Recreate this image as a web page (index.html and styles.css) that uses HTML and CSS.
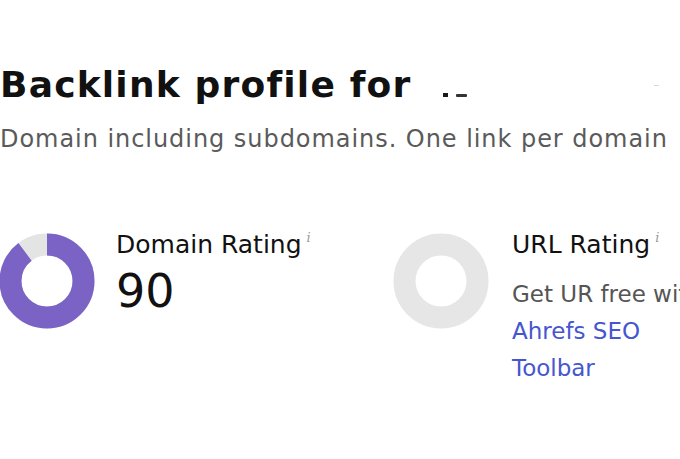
FILE: index.html
```html
<!DOCTYPE html>
<html>
<head>
<meta charset="utf-8">
<link rel="stylesheet" href="styles.css">
</head>
<body>
<main class="page">
  <h1 class="title">Backlink profile for <span class="redact"><span class="dot"></span><span class="dash"></span></span><span class="faint"></span></h1>
  <p class="subtitle">Domain including subdomains. One link per domain</p>
  <section class="metrics">
    <div class="metric metric-dr">
      <svg class="donut" width="96" height="96" viewBox="0 0 96 96">
        <circle cx="48" cy="48" r="36.5" fill="none" stroke="#e4e4e4" stroke-width="22"/>
        <circle cx="48" cy="48" r="36.5" fill="none" stroke="#7b62c5" stroke-width="22" stroke-dasharray="205.4 229.34" transform="rotate(-90 48 48)"/>
      </svg>
      <div class="info">
        <div class="label">Domain Rating<span class="tip">i</span></div>
        <div class="value">90</div>
      </div>
    </div>
    <div class="metric metric-ur">
      <svg class="donut" width="96" height="96" viewBox="0 0 96 96">
        <circle cx="48" cy="48" r="36.5" fill="none" stroke="#e6e6e6" stroke-width="22"/>
      </svg>
      <div class="info">
        <div class="label">URL Rating<span class="tip">i</span></div>
        <p class="note">Get UR free with <a class="link" href="#">Ahrefs SEO Toolbar</a></p>
      </div>
    </div>
  </section>
</main>
</body>
</html>
```

FILE: styles.css
```css
html, body {
  margin: 0;
  padding: 0;
  background: #ffffff;
  overflow: hidden;
  width: 680px;
  height: 459px;
}
.page {
  font-family: "DejaVu Sans", sans-serif;
  color: #111111;
  padding-top: 65px;
}
.title {
  margin: 0;
  font-size: 36px;
  line-height: 40px;
  letter-spacing: 1.2px;
  font-weight: bold;
  white-space: nowrap;
  position: relative;
}
.redact {
  display: inline-flex;
  align-items: center;
  gap: 8px;
  margin-left: 18px;
  vertical-align: baseline;
}
.dot {
  display: inline-block;
  width: 5px;
  height: 4px;
  background: #1a1a1a;
}
.dash {
  display: inline-block;
  width: 11px;
  height: 3px;
  background: #333333;
  border-radius: 1px;
}
.faint {
  position: absolute;
  left: 654px;
  top: 20px;
  width: 5px;
  height: 1px;
  background: #d8d8d8;
}
.subtitle {
  margin: 19px 0 0 0;
  font-size: 24px;
  line-height: 30px;
  letter-spacing: 0.95px;
  color: #5a5a5a;
  white-space: nowrap;
}
.metrics {
  display: grid;
  grid-template-columns: 393px 1fr;
  margin-top: 79px;
}
.metric {
  display: flex;
  align-items: flex-start;
  gap: 21px;
}
.metric-ur {
  gap: 23px;
}
.metric-dr .donut {
  margin-left: -1px;
}
.donut {
  flex: none;
  display: block;
}
.info {
  margin-top: -10px;
}
.label {
  font-size: 25px;
  line-height: 30px;
  color: #111111;
  white-space: nowrap;
}
.tip {
  font-family: "DejaVu Serif", serif;
  font-size: 13px;
  color: #9a9a9a;
  vertical-align: 11px;
  margin-left: 5px;
  font-style: italic;
}
.value {
  margin-top: 6px;
  font-size: 46px;
  line-height: 50px;
  color: #111111;
}
.note {
  margin: 16px 0 0 0;
  width: 200px;
  font-size: 23px;
  line-height: 37px;
  color: #555555;
}
.link {
  color: #4556cf;
  text-decoration: none;
}
```
